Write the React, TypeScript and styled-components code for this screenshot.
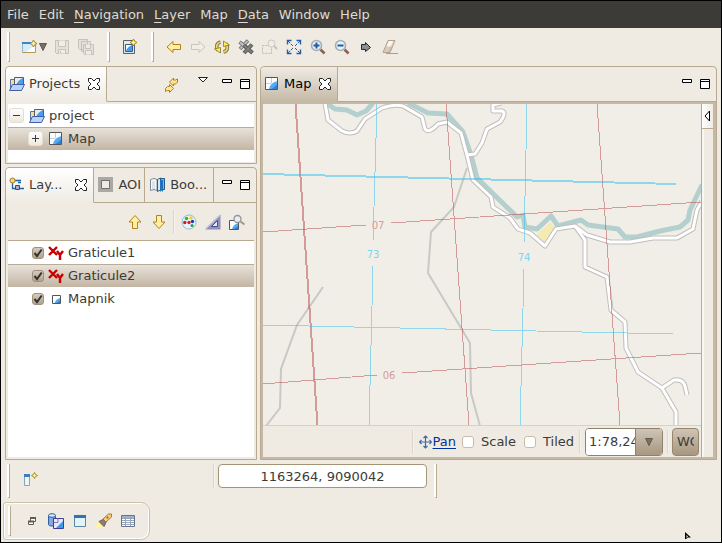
import React from "react";
import styled, { createGlobalStyle, css } from "styled-components";

const line = "#b8a98f";
const paper = "#efebe3";
const tan = "#c5b8a5";
const rowFill = "linear-gradient(#e9e4dc, #c3b5a3)";

const GlobalStyle = createGlobalStyle`
  * { box-sizing: border-box; }
  body {
    margin: 0;
    background: ${paper};
    color: #3c3b37;
    font: 13px/16px "DejaVu Sans", Verdana, sans-serif;
  }
  button, input, select { font: inherit; color: inherit; margin: 0; }
  svg { display: block; flex: none; }
`;

/* ---------- frame ---------- */

const Window = styled.div`
  position: relative;
  display: flex;
  flex-direction: column;
  min-height: 100vh;
  border: 1px solid #000;
  overflow: hidden;
`;

const MenuBar = styled.nav`
  display: flex;
  align-items: center;
  gap: 10px;
  height: 27px;
  padding-left: 6px;
  background: #3c3b37;
`;

const MenuItem = styled.button`
  padding: 0;
  border: 0;
  background: none;
  color: #dfdbd2;
  line-height: 18px;

  u { text-underline-offset: 3px; }
`;

const Toolbar = styled.div`
  display: flex;
  align-items: center;
  height: 38px;
  padding-left: 6px;
`;

const Grip = styled.span<{ $tall?: boolean }>`
  flex: none;
  width: 3px;
  height: ${(p) => (p.$tall ? 34 : 30)}px;
  border-left: 2px solid #fff;
  border-right: 1px solid ${line};
  border-bottom: 1px solid ${line};
`;

const Group = styled.div`
  display: flex;
  align-items: center;
  padding: 0 9px 0 8px;
`;

const IconButton = styled.button<{ $w?: number; $h?: number }>`
  display: flex;
  align-items: center;
  justify-content: center;
  flex: none;
  gap: 1px;
  width: ${(p) => p.$w ?? 24}px;
  height: ${(p) => p.$h ?? 24}px;
  padding: 0;
  border: 0;
  background: none;
`;

const Workbench = styled.main`
  flex: 1;
  display: grid;
  grid-template-columns: minmax(252px, 35%) minmax(0, 1fr);
  gap: 3px;
  padding: 0 4px;
`;

const Side = styled.div`
  display: flex;
  flex-direction: column;
  gap: 3px;
  min-width: 0;
`;

/* ---------- panels ---------- */

const Panel = styled.section<{ $grow?: boolean }>`
  display: flex;
  flex-direction: column;
  flex: ${(p) => (p.$grow ? 1 : "none")};
  min-width: 0;
  border: 1px solid ${line};
  border-radius: 4px 4px 0 0;
`;

const PanelHead = styled.header`
  display: flex;
  height: 35px;
`;

const Tab = styled.div<{ $state?: "open" | "focus"; $roomy?: boolean }>`
  display: flex;
  align-items: center;
  gap: 8px;
  padding: ${(p) => (p.$state ? "0 6px 0 3px" : p.$roomy ? "0 6px 0 5px" : "0 3px 0 4px")};
  border-right: 1px solid ${line};
  border-bottom: 1px solid ${line};
  ${(p) =>
    p.$state === "open" &&
    css`
      border-bottom-color: transparent;
      border-radius: 4px 0 0 0;
      background: linear-gradient(#fff, ${paper}) border-box;
    `}
  ${(p) =>
    p.$state === "focus" &&
    css`
      border-bottom-color: ${tan};
      border-radius: 4px 0 0 0;
      background: linear-gradient(#efebe4, ${tan}) border-box;
      color: #000;
    `}
`;

const TabLabel = styled.button`
  display: flex;
  align-items: center;
  gap: 4px;
  padding: 0;
  border: 0;
  background: none;
  white-space: nowrap;
`;

const CloseSlot = styled.span<{ $far?: boolean }>`
  padding-left: ${(p) => (p.$far ? 5 : 0)}px;
`;

const HeadTools = styled.div`
  flex: 1;
  display: flex;
  justify-content: flex-end;
  align-items: flex-start;
  padding: 6px 2px 0 0;
  border-bottom: 1px solid ${line};
`;

const Spacer = styled.span<{ $w: number }>`
  flex: none;
  width: ${(p) => p.$w}px;
`;

const List = styled.ul<{ $grow?: boolean }>`
  flex: ${(p) => (p.$grow ? 1 : "none")};
  min-height: 58px;
  margin: 2px 2px 1px;
  padding: 0;
  background: #fff;
  list-style: none;
`;

const LayerList = styled(List)`
  margin: 0 2px 2px;
  border-top: 1px solid ${line};
`;

const Row = styled.li<{ $selected?: boolean; $indent: number }>`
  display: flex;
  align-items: center;
  gap: 4px;
  height: 23px;
  padding-left: ${(p) => p.$indent}px;
  ${(p) =>
    p.$selected &&
    css`
      background: ${rowFill};
      box-shadow: inset 0 1px #b9ac99;
    `}
`;

const RowLabel = styled.label`
  display: flex;
  align-items: center;
  gap: 4px;
`;

const Expander = styled.button`
  display: flex;
  align-items: center;
  justify-content: center;
  width: 15px;
  height: 15px;
  margin-right: 1px;
  padding: 0;
  border: 1px solid #e4ddd1;
  border-radius: 3px;
  background: linear-gradient(#fff, #eee8de);
`;

const Tick = styled.input`
  appearance: none;
  flex: none;
  width: 12px;
  height: 12px;
  border: 1px solid #c9bda9;
  border-radius: 3px;
  background: #fff;

  &:checked {
    border-color: #a19179;
    background: url("data:image/svg+xml,%3Csvg xmlns='http://www.w3.org/2000/svg' viewBox='0 0 10 10'%3E%3Cpath d='M1.5 5L4 8L8.7 1.5' fill='none' stroke='%23333' stroke-width='2'/%3E%3C/svg%3E"),
      linear-gradient(#d5cabb, #b3a38d);
  }
`;

const LayerTools = styled.div`
  display: flex;
  align-items: center;
  justify-content: flex-end;
  height: 37px;
  padding-right: 7px;
`;

const Divider = styled.span<{ $m?: string }>`
  flex: none;
  width: 2px;
  height: 24px;
  margin: ${(p) => p.$m ?? "0"};
  border-left: 1px solid #ddd6c8;
  border-right: 1px solid #f6f3ee;
`;

/* ---------- map editor ---------- */

const Editor = styled.div`
  flex: 1;
  display: flex;
  min-height: 0;
  padding: 2px 3px 2px 2px;
  background: ${tan};
`;

const MapColumn = styled.div`
  flex: 1;
  display: flex;
  flex-direction: column;
  min-width: 0;
  background: ${paper};
`;

const MapCanvas = styled.svg`
  flex: 1 1 321px;
  width: 100%;
  min-height: 0;
  background: #f1eee8;
`;

const MapBar = styled.div`
  display: flex;
  align-items: center;
  justify-content: flex-end;
  height: 32px;
  padding-right: 2px;
  border-top: 1px solid #d9d0c1;
`;

const PanLink = styled.a`
  display: flex;
  align-items: center;
  gap: 1px;
  margin-right: 6px;
  color: #003399;
  text-decoration: underline;
  text-underline-offset: 2px;
`;

const Option = styled.label`
  display: flex;
  align-items: center;
  gap: 7px;
  margin-right: 8px;

  &:last-of-type { margin-right: 5px; }
`;

const Combo = styled.div`
  display: grid;
  flex: none;
  width: 78px;
  height: 28px;
  border: 1px solid #8f816a;
  border-radius: 4px;
  overflow: hidden;
`;

const ScaleSelect = styled.select`
  grid-area: 1 / 1;
  width: 100%;
  appearance: none;
  padding: 0 27px 0 3px;
  border: 0;
  border-radius: 0;
  background: #fff;
`;

const ComboArrow = styled.span`
  grid-area: 1 / 1;
  justify-self: end;
  display: flex;
  align-items: center;
  justify-content: center;
  width: 27px;
  border-left: 1px solid #8f816a;
  background: linear-gradient(#cfc4b6, #a8977f);
  pointer-events: none;
`;

const CrsButton = styled.button`
  flex: none;
  width: 27px;
  height: 28px;
  padding: 0 4px;
  border: 1px solid #94866f;
  border-radius: 4px;
  background: linear-gradient(#cfc4b6, #a8977f);
`;

const ClippedText = styled.span`
  display: block;
  overflow: hidden;
  text-align: left;
  white-space: nowrap;
`;

const PaletteStrip = styled.aside`
  width: 12px;
  border-left: 1px solid ${line};
  background: ${paper};
  box-shadow: inset 2px 0 #f9f7f4;
`;

const PaletteButton = styled.button`
  display: flex;
  align-items: center;
  justify-content: center;
  width: 11px;
  height: 25px;
  padding: 0;
  border: 0;
  border-bottom: 1px solid ${line};
  background: linear-gradient(90deg, #fff, ${paper});
`;

/* ---------- bottom trims ---------- */

const StatusBar = styled.footer`
  display: flex;
  align-items: flex-start;
  height: 41px;
  padding: 4px 0 0 6px;
`;

const StatusGroup = styled.div`
  flex: none;
  width: 203px;
  padding: 3px 0 0 9px;
`;

const Coordinates = styled.input`
  width: 209px;
  height: 24px;
  margin: 0 7px 0 3px;
  padding: 0;
  border: 1px solid #a39577;
  border-radius: 4px;
  background: #fff;
  text-align: center;
`;

const FastViews = styled.div`
  display: flex;
  align-items: center;
  align-self: flex-start;
  height: 38px;
  margin: 1px 2px 2px;
  padding: 0 9px 0 4px;
  border: 1px solid #cbc1ac;
  border-radius: 3px 9px 9px 3px;
  box-shadow: inset 1px 1px #fff, inset -1px -1px #fff;
`;

const Pointer = styled.svg`
  position: absolute;
  right: 29px;
  bottom: 3px;
`;

/* ---------- icons ---------- */

type Kids = { children: React.ReactNode; w?: number; h?: number };
const Pic = ({ children, w = 16, h = 16 }: Kids) => (
  <svg width={w} height={h} viewBox={`0 0 ${w} ${h}`} aria-hidden="true">
    {children}
  </svg>
);

const Spark = ({ x, y }: { x: number; y: number }) => (
  <path
    transform={`translate(${x} ${y})`}
    d="M3.5 0L4.7 2.3L7 3.5L4.7 4.7L3.5 7L2.3 4.7L0 3.5L2.3 2.3Z"
    fill="#fff3a8"
    stroke="#a78622"
  />
);

const NewIcon = () => (
  <Pic>
    <path d="M.5 3.5h13v10H.5z" fill="#d5edf9" stroke="#b09a55" />
    <path d="M13 13V6L4 13z" fill="#fff" opacity=".8" />
    <path d="M0 3h9v2H0z" fill="#3f86c4" />
    <path d="M.5 5v8.500" stroke="#8fb5cf" />
    <Spark x={8} y={1} />
  </Pic>
);
const DownArrow = ({ w = 8 }: { w?: number }) => (
  <Pic w={w} h={8}>
    <path d={`M.5 0.5H${w - 0.5}L${w / 2} 7.5Z`} fill="#777065" stroke="#615b50" />
  </Pic>
);
const SaveIcon = () => (
  <Pic>
    <g fill="#e5e1da" stroke="#c6c2ba">
      <path d="M1.500 1.500h13v13h-12l-1-1z" />
      <path d="M4.500 1.500v6h7v-6M4.500 14.500v-4h7v4M6.500 12v2" fill="#f0ede7" />
    </g>
  </Pic>
);
const SaveAllIcon = () => (
  <Pic>
    <g fill="#e5e1da" stroke="#c6c2ba">
      <path d="M.5.5h9v10h-8l-1-1zM3.500 2.500h9v10h-9z" />
      <path d="M5.500 5.500h10v10h-9l-1-1z" />
      <path d="M7.500 5.500v4h5v-4M7.500 15.500v-4h6v4" fill="#f0ede7" />
    </g>
  </Pic>
);
const MapFold = ({ x = 0, y = 0, s = 12 }: { x?: number; y?: number; s?: number }) => (
  <g transform={`translate(${x} ${y})`}>
    <path d={`M.5.5h${s - 1}v${s - 1}H.5z`} fill="#fff" stroke="#4f565e" />
    {s > 10 && <path d={`M1 6.500h5M6.500 1v5`} stroke="#c3cdd5" />}
    <path
      d={`M${s - 1} ${s * 0.32}V${s - 1}H${s * 0.3}Q${s * 0.42} ${s * 0.42} ${s - 1} ${s * 0.32}Z`}
      fill="#5aaaf2"
    />
    <path d={`M${s - 1} ${s * 0.6}V${s - 1}H${s * 0.5}Z`} fill="#2b83dd" />
  </g>
);
const MapIcon = () => (
  <Pic>
    <MapFold x={1} y={1} s={13} />
  </Pic>
);
const SmallMapIcon = () => (
  <Pic>
    <MapFold x={4} y={4} s={9} />
  </Pic>
);
const NewMapIcon = () => (
  <Pic>
    <path d="M1.500 1.500h11v13h-11z" fill="#dbe7ef" stroke="#526273" />
    <path d="M2.500 2.500h9v3h-9z" fill="#f5eab8" />
    <path d="M3.500 5.500h7v7h-7z" fill="#fff" stroke="#315f94" />
    <path d="M10 6v6H4Q5 8 10 6Z" fill="#4a9bec" />
    <Spark x={8} y={0} />
  </Pic>
);
const arrow = "M1 8L7 2.500V5.500H14.500V10.500H7V13.500Z";
const BackIcon = () => (
  <Pic><path d={arrow} fill="#fff0a5" stroke="#b87d14" /></Pic>
);
const ForwardIcon = () => (
  <Pic><path d={arrow} fill="#f0ede7" stroke="#c9c5bd" transform="matrix(-1 0 0 1 16 0)" /></Pic>
);
const RefreshIcon = () => (
  <Pic>
    <g fill="none" stroke="#7a7157" strokeWidth="3.600">
      <path d="M6.500 3C2.500 4 1.500 8 4 11.500M9.500 13C13.500 12 14.500 8 12 4.500" />
    </g>
    <g fill="none" stroke="#efd850" strokeWidth="1.800">
      <path d="M6.500 3C2.500 4 1.500 8 4 11.500M9.500 13C13.500 12 14.500 8 12 4.500" />
    </g>
    <path d="M.5 10l6-1.500v5.500zM15.500 6l-6 1.500V2z" fill="#ffed55" stroke="#8a7426" strokeWidth=".8" />
  </Pic>
);
const DeleteIcon = () => (
  <Pic>
    <path d="M1.500 3l9 7M10 1.500L2 10" stroke="#777" strokeWidth="3.600" />
    <path d="M2 3.500l8 6M9.500 2L2.500 9.500" stroke="#c8c8c8" strokeWidth="1.600" />
    <path d="M5.500 6l9 8M14 5.500L6 14" stroke="#5e5e5e" strokeWidth="4" />
    <path d="M6 6.500l8 7M13.500 6L6.500 13.500" stroke="#858585" strokeWidth="1.500" />
  </Pic>
);
const ZoomBoxIcon = () => (
  <Pic>
    <path d="M.5 6.500h9v8h-9z" fill="none" stroke="#bfbbb2" strokeDasharray="2 1" />
    <circle cx="9.500" cy="4.500" r="3.500" fill="#eeece8" stroke="#ccc8c1" />
    <path d="M12 7l3 3" stroke="#c7c3bb" strokeWidth="2" />
  </Pic>
);
const ExtentIcon = () => (
  <Pic>
    <g fill="none" stroke="#245ea5">
      <path d="M1.500 5.500v-4h4M10.500 1.500h4v4M14.500 10.500v4h-4M5.500 14.500h-4v-4" strokeWidth="1.400" />
      <path d="M2 2l5 5M14 2L9 7M2 14l5-5M14 14L9 9" strokeDasharray="3 1" />
    </g>
  </Pic>
);
const ZoomIcon = ({ plus }: { plus?: boolean }) => (
  <Pic>
    <path d="M10.500 10.500l4 4" stroke="#8a6450" strokeWidth="2.600" />
    <circle cx="6.500" cy="6.500" r="5" fill="#e5f0f7" stroke="#a4aeb0" strokeWidth="1.600" />
    <path d={plus ? "M3.500 6.500h6M6.500 3.500v6" : "M3.500 6.500h6"} stroke="#1d5ca7" strokeWidth="2" />
  </Pic>
);
const GoIcon = () => (
  <Pic><path d="M3.500 5.500h4v-2l5 5-5 4v-2h-4z" fill="#8b9095" stroke="#25282b" /></Pic>
);
const EraserIcon = () => (
  <Pic>
    <path d="M6 1.500h7L8 13.500H1z" fill="#e2d4c4" stroke="#b3a28e" />
    <path d="M7 2h4L6 13H2z" fill="#fbf7f2" />
    <path d="M4 7.500h7L8.500 13.500H1z" fill="#c4ae97" opacity=".6" />
    <path d="M4 14.500h12" stroke="#a8a07f" />
  </Pic>
);

const FolderMap = () => (
  <Pic>
    <path d="M1.500 12V3.500h4l1 1h3V12z" fill="#f4dd9d" stroke="#5e7495" />
    <path d="M5.500 1.500h9V9h-9z" fill="#e8edf3" stroke="#555d69" />
    <path d="M14 2v7H7Q9 4 14 2z" fill="#4b9dec" />
    <path d="M.5 14.500l3-6h12l-3 6z" fill="#bad2f7" stroke="#3e5fa8" />
  </Pic>
);
const CloseIcon = () => (
  <Pic w={12} h={12}>
    <path
      d="M.5.5h3L6 3 8.500.5h3v3L9 6l2.500 2.500v3h-3L6 9l-2.500 2.500h-3v-3L3 6 .5 3.500z"
      fill="#fff"
      stroke="#222"
    />
  </Pic>
);
const MinIcon = () => (
  <Pic w={10} h={12}><path d="M.5.5h9v3h-9z" fill="#fff" stroke="#000" /></Pic>
);
const MaxIcon = () => (
  <Pic w={10} h={12}>
    <path d="M.5.500h9v9h-9zM0 2.500h10" fill="#fff" stroke="#000" />
  </Pic>
);
const ViewMenuIcon = () => (
  <Pic w={10} h={12}><path d="M.5.500h9L5 5z" fill="#fff" stroke="#222" /></Pic>
);
const LinkIcon = () => (
  <Pic>
    <path d="M5.500 5L9.500 1v2h2l2-1v3l-2 2h-2v2z" fill="#ffe694" stroke="#b57e18" />
    <path d="M9.500 11.500l-4 4v-2h-2l-2 1v-3l2-2h2v-2z" fill="#ffe694" stroke="#b57e18" />
  </Pic>
);
const LayersIcon = () => (
  <Pic>
    <path d="M3.500 5v6.500H6M6 3.500h6M9 5.500h3M11 11.500h4" fill="none" stroke="#1d669c" strokeWidth="1.300" />
    <circle cx="3.500" cy="3.500" r="2.500" fill="#f4d584" stroke="#a7791e" />
    <path d="M6.500 8.500h4v4h-4z" fill="#b4a6cb" stroke="#4f426e" />
  </Pic>
);
const AoiIcon = () => (
  <Pic>
    <path d="M0 0h15v15H0z" fill="#a9a8a6" />
    <path d="M3.500 3.500h8v8h-8z" fill={paper} stroke="#716f6b" />
  </Pic>
);
const BookIcon = () => (
  <Pic>
    <path d="M.5 2.500L4 1.500l3 1v11l-3-1-3.500 1z" fill="#f7fafc" stroke="#7b8a96" />
    <path d="M2 5h3M2 7h3M2 9h3M2 11h3" stroke="#c3ccd3" />
    <path d="M7.500 2.500l3-1.500v12l-3 1.500z" fill="#d6e6f4" stroke="#335e83" />
    <path d="M10.500 1.500h4v11h-4z" fill="#7db7ea" stroke="#215a92" />
    <path d="M10 3v12l1.500-1.500L13 15V3z" fill="#2371b8" />
  </Pic>
);
const UpIcon = ({ down }: { down?: boolean }) => (
  <Pic>
    <path
      d="M8 1.500L14 8H10.500v6.500h-5V8H2z"
      fill="#ffefa0"
      stroke="#b38220"
      transform={down ? "rotate(180 8 8)" : undefined}
    />
  </Pic>
);
const PaletteIcon = () => (
  <Pic>
    <circle cx="8" cy="8" r="7" fill="#e9f5fc" stroke="#91b9d2" />
    <circle cx="5.500" cy="4.500" r="1.700" fill="#30b338" />
    <circle cx="10" cy="4" r="1.700" fill="#f2d21b" />
    <circle cx="3.800" cy="8.500" r="1.700" fill="#d11c27" />
    <circle cx="8" cy="8.500" r="1.700" fill="#d9232a" />
    <circle cx="11.500" cy="7.500" r="1.700" fill="#1c36c4" />
    <circle cx="11" cy="11.500" r="1.500" fill="#2f9a3c" />
  </Pic>
);
const RampIcon = () => (
  <Pic>
    <path d="M0 15.500L15.500.5v15z" fill="#8f91bd" />
    <path d="M6.500 12.500L12.500 6.500v6z" fill="#e6e7f4" stroke="#4c4f8f" />
    <path d="M1 14.500L14.500 1.500" stroke="#c3c5e1" strokeWidth="1.500" />
  </Pic>
);
const ZoomLayerIcon = () => (
  <Pic>
    <MapFold x={0} y={6} s={10} />
    <path d="M11.500 7.500l4 3" stroke="#a99677" strokeWidth="2" />
    <circle cx="8.500" cy="5" r="3.500" fill="#e9edf2" stroke="#8f959c" strokeWidth="1.300" />
  </Pic>
);
const XYIcon = () => (
  <Pic>
    <path d="M1 2l8 8M9 2L1 10M9 6l3 4 3-4M12 9.500V15" fill="none" stroke="#c80000" strokeWidth="2.400" />
  </Pic>
);
const PanIcon = () => (
  <Pic w={13} h={14}>
    <path d="M6.500 1v12M.5 7h12M4.500 3l2-2 2 2M4.500 11l2 2 2-2M2.500 5l-2 2 2 2M10.500 5l2 2-2 2" fill="none" stroke="#3e6ba6" strokeWidth="1.200" />
  </Pic>
);
const PerspectiveIcon = () => (
  <Pic>
    <path d="M1.500 3.500h5v11h-5z" fill="#e9f6fa" stroke="#8da2aa" />
    <path d="M1 3h6v3H1z" fill="#3d7fbb" />
    <path d="M11.500 1.500l1 2 2 1-2 1-1 2-1-2-2-1 2-1z" fill="#fff6a5" stroke="#a4871d" />
  </Pic>
);
const RestoreIcon = () => (
  <Pic>
    <path d="M6.500 4.500h5v4h-5zM4.500 8.500h5v3h-5z" fill="#fff" stroke="#625b50" />
    <path d="M6 5h6M4 8.500h6" stroke="#625b50" strokeWidth="2" />
  </Pic>
);
const CatalogIcon = () => (
  <Pic>
    <path d="M.5 2.500v9c0 2 7 2 7 0v-9" fill="#81a9dc" stroke="#315ea2" />
    <ellipse cx="4" cy="2.500" rx="3.500" ry="1.800" fill="#d8e9fa" stroke="#315ea2" />
    <path d="M5.500 5.500h10v10h-10z" fill="#e8e7f6" stroke="#3d3d93" />
    <path d="M15 8v7H8z" fill="#3e98ed" />
    <path d="M6 9.500h4v-4" fill="none" stroke="#7f78b9" />
  </Pic>
);
const ViewIcon = () => (
  <Pic>
    <path d="M2.500 2.500h11v11h-11z" fill="#e3f3fa" stroke="#5b86a8" />
    <path d="M2 2h12v3H2z" fill="#2f72b6" />
  </Pic>
);
const TorchIcon = () => (
  <Pic>
    <path d="M0 15L1 10l3-2 4 4-3 3z" fill="#fff5a1" />
    <path d="M3 8.500L7 6.500 10 9.500 8 13.500z" fill="#8e7d75" stroke="#665c5a" />
    <path d="M7 6l5.500-5h3v3L10 9z" fill="#f8cd7c" stroke="#b2752a" />
    <circle cx="11.500" cy="4.500" r="1" fill="#3c65a7" />
  </Pic>
);
const TableIcon = () => (
  <Pic>
    <path d="M1.500 2.500h13v11h-13z" fill="#fff" stroke="#64738f" />
    <path d="M2 4h12" stroke="#9fb2d0" strokeWidth="2" />
    <path d="M2 5.500h12M2 7.500h12M2 9.500h12M2 11.500h12M5.500 4v9M10.500 4v9" stroke="#98a4b8" />
  </Pic>
);

/* ---------- map ---------- */

const rivers = [
  "M326 103L335 109L347 110L357 115L366 111L373 103",
  "M408 103L428 113L447 114L463 132L471 155L477 178L517 217L523 215L525 227L537 229L551 216L558 226L581 220L588 225L618 229L625 237L637 237L660 231L680 227L688 220L690 210L702 185",
];
const roads = [
  "M325 103L328 120L342 131Q350 135 357 131L365 119L382 108Q393 104 403 106L422 117L425 129Q429 134 438 124L447 122L461 133L467 155L473 180L491 197L493 207L510 218L518 229L530 233L545 246L556 229L575 226L587 235L610 242H630L653 238L677 238L693 229L697 210L702 201",
  "M467 155L475 154L482 143L487 129L500 122Q507 113 502 111L493 111V105L501 103",
  "M575 226L585 240L585 267L607 277L611 310L625 322L626 348L638 372L662 388L676 412V426",
  "M662 388L674 380Q683 379 685 386L687 395",
];
const trails = "M467 168L454 207L431 232L428 273L470 343L471 393L480 426M323 287L297 325L281 369L280 408L266 426";

const MapView = () => (
  <MapCanvas viewBox="263 104 438 321" preserveAspectRatio="xMidYMid slice" role="img" aria-label="Map">
    <path d={trails} fill="none" stroke="#c9c8c5" strokeWidth="2" />
    <path d="M536 235L551 222L555 229L546 242Z" fill="#f5ebb1" />
    {rivers.map((d) => (
      <path key={d} d={d} fill="none" stroke="#b3d0cf" strokeWidth="5" strokeLinejoin="round" />
    ))}
    {roads.map((d) => (
      <path key={d} d={d} fill="none" stroke="#bfbebb" strokeWidth="5" strokeLinejoin="round" />
    ))}
    {roads.map((d) => (
      <path key={d} d={d} fill="none" stroke="#fff" strokeWidth="3" strokeLinejoin="round" />
    ))}
    <g fill="none" stroke="#b84545" strokeOpacity=".5" shapeRendering="crispEdges">
      <path d="M295.500 104L317.500 425" strokeWidth="2" />
      <path d="M446 104L469 425M597 104L620 425M263 232L366 225M391 223L701 202M263 384L377 375M402 373L701 353" />
    </g>
    <g fill="none" stroke="#2bbdf0" strokeOpacity=".5" shapeRendering="crispEdges">
      <path d="M263 174L676 184" strokeWidth="2" />
      <path d="M263 325L673 334M377 104L373 241M373 266L369 425M527 104L524 243M524 269L520 425" />
    </g>
    <g fontFamily="DejaVu Sans" fontSize="10" textAnchor="middle">
      <g fill="#d59c9a">
        <text x="378" y="229">07</text>
        <text x="389" y="379">06</text>
      </g>
      <g fill="#80d3f1">
        <text x="373" y="258">73</text>
        <text x="524" y="261">74</text>
      </g>
    </g>
  </MapCanvas>
);

/* ---------- application ---------- */

const menus: [string, boolean][] = [
  ["File", false],
  ["Edit", false],
  ["Navigation", true],
  ["Layer", true],
  ["Map", false],
  ["Data", true],
  ["Window", false],
  ["Help", false],
];

const navTools: [string, React.ReactNode][] = [
  ["Back", <BackIcon />],
  ["Forward", <ForwardIcon />],
  ["Refresh", <RefreshIcon />],
  ["Stop", <DeleteIcon />],
  ["Zoom to selection", <ZoomBoxIcon />],
  ["Zoom to extent", <ExtentIcon />],
  ["Zoom in", <ZoomIcon plus />],
  ["Zoom out", <ZoomIcon />],
  ["Commit", <GoIcon />],
  ["Clear", <EraserIcon />],
];

const fastViews: [string, React.ReactNode][] = [
  ["Restore", <RestoreIcon />],
  ["Catalog", <CatalogIcon />],
  ["View", <ViewIcon />],
  ["Search", <TorchIcon />],
  ["Table", <TableIcon />],
];

const layers = [
  { name: "Graticule1", icon: <XYIcon /> },
  { name: "Graticule2", icon: <XYIcon />, selected: true },
  { name: "Mapnik", icon: <SmallMapIcon /> },
];

const MinMax = () => (
  <>
    <IconButton $w={18} aria-label="Minimize"><MinIcon /></IconButton>
    <IconButton $w={18} aria-label="Maximize"><MaxIcon /></IconButton>
  </>
);

const Close = ({ far }: { far?: boolean }) => (
  <CloseSlot $far={far}>
    <IconButton $w={12} aria-label="Close"><CloseIcon /></IconButton>
  </CloseSlot>
);

export default function App() {
  return (
    <Window>
      <GlobalStyle />
      <MenuBar>
        {menus.map(([name, key]) => (
          <MenuItem key={name}>
            {key ? <><u>{name[0]}</u>{name.slice(1)}</> : name}
          </MenuItem>
        ))}
      </MenuBar>

      <Toolbar>
        <Grip />
        <Group>
          <IconButton $w={32} aria-label="New"><NewIcon /><DownArrow /></IconButton>
          <IconButton aria-label="Save" disabled><SaveIcon /></IconButton>
          <IconButton aria-label="Save all" disabled><SaveAllIcon /></IconButton>
        </Group>
        <Grip />
        <Group>
          <IconButton aria-label="New map"><NewMapIcon /></IconButton>
        </Group>
        <Grip />
        <Group>
          {navTools.map(([name, icon]) => (
            <IconButton key={name} aria-label={name}>{icon}</IconButton>
          ))}
        </Group>
      </Toolbar>

      <Workbench>
        <Side>
          <Panel>
            <PanelHead>
              <Tab $state="open">
                <TabLabel><FolderMap />Projects</TabLabel>
                <Close />
              </Tab>
              <HeadTools>
                <IconButton $w={18} aria-label="Link with editor"><LinkIcon /></IconButton>
                <Spacer $w={13} />
                <IconButton $w={18} $h={20} aria-label="View menu"><ViewMenuIcon /></IconButton>
                <Spacer $w={6} />
                <MinMax />
              </HeadTools>
            </PanelHead>
            <List>
              <Row $indent={1}>
                <Expander aria-label="Collapse">
                  <Pic w={9} h={9}><path d="M1 4.500h7" stroke="#3c3b37" /></Pic>
                </Expander>
                <FolderMap />project
              </Row>
              <Row $indent={20} $selected>
                <Expander aria-label="Expand">
                  <Pic w={9} h={9}><path d="M1 4.500h7M4.500 1v7" stroke="#3c3b37" /></Pic>
                </Expander>
                <MapIcon />Map
              </Row>
            </List>
          </Panel>

          <Panel $grow>
            <PanelHead>
              <Tab $state="open">
                <TabLabel><LayersIcon />Lay...</TabLabel>
                <Close far />
              </Tab>
              <Tab>
                <TabLabel><AoiIcon />AOI</TabLabel>
              </Tab>
              <Tab $roomy>
                <TabLabel><BookIcon />Boo...</TabLabel>
              </Tab>
              <HeadTools><MinMax /></HeadTools>
            </PanelHead>
            <LayerTools>
              <IconButton aria-label="Move up"><UpIcon /></IconButton>
              <IconButton aria-label="Move down"><UpIcon down /></IconButton>
              <Divider $m="0 2px" />
              <IconButton aria-label="Style"><PaletteIcon /></IconButton>
              <IconButton aria-label="Transparency"><RampIcon /></IconButton>
              <IconButton aria-label="Zoom to layer"><ZoomLayerIcon /></IconButton>
            </LayerTools>
            <LayerList $grow>
              {layers.map((l) => (
                <Row key={l.name} $indent={24} $selected={l.selected}>
                  <RowLabel>
                    <Tick type="checkbox" defaultChecked />
                    {l.icon}
                    {l.name}
                  </RowLabel>
                </Row>
              ))}
            </LayerList>
          </Panel>
        </Side>

        <Panel $grow>
          <PanelHead>
            <Tab $state="focus">
              <TabLabel><MapIcon />Map</TabLabel>
              <Close />
            </Tab>
            <HeadTools><MinMax /></HeadTools>
          </PanelHead>
          <Editor>
            <MapColumn>
              <MapView />
              <MapBar>
                <Divider $m="0 5px 0 0" />
                <PanLink href="#pan"><PanIcon />Pan</PanLink>
                <Option><Tick type="checkbox" />Scale</Option>
                <Option><Tick type="checkbox" />Tiled</Option>
                <Divider $m="0 4px 0 0" />
                <Combo>
                  <ScaleSelect aria-label="Map scale">
                    <option>1:78,24</option>
                  </ScaleSelect>
                  <ComboArrow><DownArrow /></ComboArrow>
                </Combo>
                <Divider $m="0 3px 0 4px" />
                <CrsButton aria-label="Coordinate system">
                  <ClippedText>WG</ClippedText>
                </CrsButton>
              </MapBar>
            </MapColumn>
            <PaletteStrip>
              <PaletteButton aria-label="Show palette">
                <Pic w={7} h={12}><path d="M5.500 1v10L1 6z" fill="#fff" stroke="#000" /></Pic>
              </PaletteButton>
            </PaletteStrip>
          </Editor>
        </Panel>
      </Workbench>

      <StatusBar>
        <Grip $tall />
        <StatusGroup>
          <IconButton aria-label="Open perspective"><PerspectiveIcon /></IconButton>
        </StatusGroup>
        <Divider />
        <Coordinates aria-label="Coordinates" defaultValue="1163264, 9090042" />
        <Grip $tall />
      </StatusBar>

      <FastViews>
        <Grip />
        <Spacer $w={9} />
        {fastViews.map(([name, icon]) => (
          <IconButton key={name} aria-label={name}>{icon}</IconButton>
        ))}
      </FastViews>

      <Pointer width="7" height="7" viewBox="0 0 7 7" aria-hidden="true">
        <path d="M0 0L6 5.500H3L1 7H0Z" fill="#000" />
        <path d="M1.500 3L3 4.500L1.500 6Z" fill="#fff" />
      </Pointer>
    </Window>
  );
}
